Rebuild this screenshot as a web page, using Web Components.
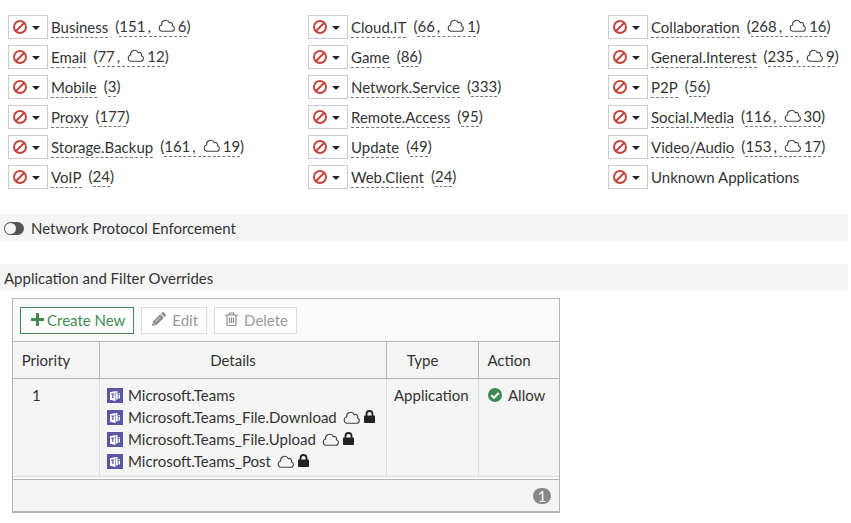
<!DOCTYPE html>
<html lang="en">
<head>
<meta charset="utf-8">
<title>Application Control</title>
<style>
    body {
        margin: 0;
        background: #fff;
        color: #333;
        font: 15px/22px Lato, "Open Sans", sans-serif;
    }
    .categories {
        display: grid;
        grid-template-columns: minmax(0, 300px) minmax(0, 300px) 1fr;
        row-gap: 6px;
        padding: 15px 0 25px 8px;
    }
    main {
        margin-right: 3px;
    }
    section-bar + section-bar {
        margin-top: 23px;
    }
    overrides-panel {
        margin: 7px 0 0 12px;
    }
</style>
</head>
<body>

<template id="ui-icon-template">
    <style>
        :host { display: inline-flex; flex: none; }
        svg { display: none; }
        :host([name="ban"]) .ban,
        :host([name="caret"]) .caret,
        :host([name="cloud"]) .cloud,
        :host([name="plus"]) .plus,
        :host([name="pencil"]) .pencil,
        :host([name="trash"]) .trash,
        :host([name="teams"]) .teams,
        :host([name="lock"]) .lock,
        :host([name="check"]) .check { display: block; }
    </style>
    <svg class="ban" width="14" height="14" viewBox="0 0 14 14" fill="none" stroke="#c4453c" stroke-width="2"><circle cx="7" cy="7" r="6"/><path d="M3 11 11 3"/></svg>
    <svg class="caret" width="8" height="6" viewBox="0 0 8 6"><path d="M0 2h8L4 6z" fill="#222"/></svg>
    <svg class="cloud" width="17" height="13" viewBox="0 0 17 13" fill="none" stroke="#444" stroke-width="1.1"><path d="M3.600 12.200h9.900a2.800 2.800 0 0 0 .8-5.500 2.200 2.200 0 0 0-3-3A4 4 0 0 0 3.700 6 3.200 3.200 0 0 0 3.600 12.200z"/></svg>
    <svg class="plus" width="13" height="13" viewBox="0 0 13 13"><path d="M5 0h3v5h5v3H8v5H5V8H0V5h5z" fill="#3e8a52"/></svg>
    <svg class="pencil" width="14" height="14" viewBox="0 0 14 14"><path d="M0 14l1-4.500L8.300 2.200l3.500 3.500L4.500 13zM9.100 1.400l1-1a1.200 1.200 0 0 1 1.700 0l1.800 1.800a1.200 1.200 0 0 1 0 1.700l-1 1z" fill="#8c8c8c"/><path d="M3.500 9.900l4.500-4.500" stroke="#fff" stroke-width=".7"/><path d="M1.200 11l1.800 1.800" stroke="#fff" stroke-width=".7"/></svg>
    <svg class="trash" width="13" height="14" viewBox="0 0 13 14" fill="none" stroke="#8c8c8c" stroke-width="1.200"><path d="M0 3h13M4 3l.6-2h3.800L9 3M2 3v9a1.500 1.500 0 0 0 1.500 1.500h6A1.500 1.500 0 0 0 11 12V3M4.500 5.500v5.500M6.500 5.500v5.500M8.500 5.500v5.500"/></svg>
    <svg class="teams" width="16" height="15" viewBox="0 0 16 15"><path d="M0 0h16v15H0z" fill="#5b55a5"/><path d="M3 4.200 8.500 3v10L3 11.800z" fill="#fff"/><path d="M4 6h3.500M5.800 6v4" stroke="#5b55a5" stroke-width="1.200"/><path d="M9 5.300h1.700v6.200H9zM11.500 7H13v3.500h-1.500z" fill="#fff"/><circle cx="9.700" cy="4" r="1" fill="#fff"/><circle cx="12.200" cy="5.700" r=".8" fill="#fff"/></svg>
    <svg class="lock" width="11" height="13" viewBox="0 0 11 13"><path d="M2.500 6V4a3 3 0 0 1 6 0v2" fill="none" stroke="#222" stroke-width="1.800"/><rect y="5.500" width="11" height="7.500" rx=".8" fill="#222"/></svg>
    <svg class="check" width="14" height="14" viewBox="0 0 14 14"><circle cx="7" cy="7" r="7" fill="#3e8a52"/><path d="M3.300 7.200 6 9.800l4.800-4.900" fill="none" stroke="#fff" stroke-width="2.200"/></svg>
</template>

<template id="app-category-template">
    <style>
        :host { display: flex; align-items: center; gap: 3px; height: 24px; white-space: nowrap; }
        button {
            display: flex;
            align-items: center;
            gap: 5px;
            box-sizing: border-box;
            width: 40px;
            height: 24px;
            padding: 0 0 1px 4px;
            border: 1px solid #ccc;
            background: #fff;
        }
        .text { display: flex; align-items: flex-start; gap: 7px; }
        a { color: inherit; text-decoration: none; }
        .name { line-height: 20px; }
        .name[href] { border-bottom: 1px dashed #777; padding-top: 1px; }
        .count { display: flex; line-height: 20px; }
        .count a { display: flex; align-items: center; height: 20px; border-bottom: 1px dashed #777; }
        .comma { padding: 0 7px 0 2px; }
        .cloud { display: flex; align-items: center; gap: 3px; }
        .cloud ui-icon { padding-bottom: 1px; }
    </style>
    <button type="button" aria-label="Block"><ui-icon name="ban"></ui-icon><ui-icon name="caret"></ui-icon></button>
    <div class="text">
        <a class="name"><slot></slot></a>
        <span class="count">(<a href="#"><span class="total"></span><span class="comma">,</span><span class="cloud"><ui-icon name="cloud"></ui-icon><span class="cloud-total"></span></span></a>)</span>
    </div>
</template>

<template id="section-bar-template">
    <style>
        :host { display: block; background: #f5f5f5; }
        div { display: flex; align-items: center; gap: 7px; padding: 3px 4px 2px; }
        h2 { margin: 0; font: inherit; }
        input {
            appearance: none;
            display: none;
            box-sizing: border-box;
            width: 20px;
            height: 13px;
            margin: 0;
            padding: 1px;
            border-radius: 7px;
            background: #555;
        }
        input::before { content: ""; width: 11px; height: 11px; border-radius: 50%; background: #f5f5f5; }
        input:checked { justify-content: flex-end; }
        :host([toggle]) input { display: flex; }
    </style>
    <div>
        <input type="checkbox" id="switch">
        <h2><label for="switch"><slot></slot></label></h2>
    </div>
</template>

<template id="tool-button-template">
    <style>
        :host { display: block; }
        button {
            display: flex;
            align-items: center;
            gap: 6px;
            box-sizing: border-box;
            height: 27px;
            padding: 0 8px 1px 10px;
            border: 1px solid #ddd;
            background: #fff;
            color: #999;
            font: inherit;
        }
        ui-icon { padding-bottom: 2px; }
        :host([primary]) button { gap: 3px; border-color: #3e8a52; color: #3e8a52; }
    </style>
    <button type="button"><ui-icon></ui-icon><slot></slot></button>
</template>

<template id="app-signature-template">
    <style>
        :host { display: flex; align-items: center; gap: 5px; height: 22px; white-space: nowrap; }
        .flags { display: none; align-items: center; gap: 4px; padding-left: 1px; }
        :host([cloud]) .flags { display: flex; }
        .flags ui-icon[name="lock"] { padding-bottom: 2px; }
    </style>
    <ui-icon name="teams"></ui-icon>
    <span><slot></slot></span>
    <span class="flags"><ui-icon name="cloud"></ui-icon><ui-icon name="lock"></ui-icon></span>
</template>

<template id="overrides-panel-template">
    <style>
        :host { display: block; width: fit-content; border: 1px solid #b5b5b5; border-bottom-width: 2px; }
        .toolbar { display: flex; gap: 7px; padding: 8px 7px 7px; background: #fafafa; }
        table { border-collapse: separate; border-spacing: 0; }
        th, td { background: #f5f5f5; border-right: 1px solid #ddd; }
        th:last-child, td:last-child { border-right: 0; }
        th {
            padding: 7px 20px 7px 0;
            border-top: 1px solid #b5b5b5;
            border-bottom: 1px solid #b5b5b5;
            border-right-color: #b5b5b5;
            font-weight: normal;
        }
        td { padding: 5px 7px 4px; border-bottom: 1px solid #ddd; vertical-align: top; }
        .priority { width: 66px; }
        .details { width: 266px; }
        .type { width: 71px; }
        .action { width: 60px; }
        td.index { padding-left: 19px; }
        .verdict { display: flex; align-items: center; gap: 6px; padding-left: 2px; }
        footer { display: flex; justify-content: flex-end; margin-top: 2px; padding: 8px 8px 7px; border-top: 1px solid #b5b5b5; background: #f5f5f5; }
        .page { width: 18px; height: 16px; border-radius: 8px; background: #888; color: #fff; line-height: 16px; text-align: center; }
    </style>
    <div class="toolbar"><slot name="toolbar"></slot></div>
    <table>
        <thead>
            <tr><th class="priority">Priority</th><th class="details">Details</th><th class="type">Type</th><th class="action">Action</th></tr>
        </thead>
        <tbody>
            <tr>
                <td class="index">1</td>
                <td><slot></slot></td>
                <td>Application</td>
                <td><span class="verdict"><ui-icon name="check"></ui-icon>Allow</span></td>
            </tr>
        </tbody>
    </table>
    <footer><span class="page">1</span></footer>
</template>

<main>
    <div class="categories">
        <app-category total="151" cloud="6">Business</app-category>
        <app-category total="66" cloud="1">Cloud.IT</app-category>
        <app-category total="268" cloud="16">Collaboration</app-category>
        <app-category total="77" cloud="12">Email</app-category>
        <app-category total="86">Game</app-category>
        <app-category total="235" cloud="9">General.Interest</app-category>
        <app-category total="3">Mobile</app-category>
        <app-category total="333">Network.Service</app-category>
        <app-category total="56">P2P</app-category>
        <app-category total="177">Proxy</app-category>
        <app-category total="95">Remote.Access</app-category>
        <app-category total="116" cloud="30">Social.Media</app-category>
        <app-category total="161" cloud="19">Storage.Backup</app-category>
        <app-category total="49">Update</app-category>
        <app-category total="153" cloud="17">Video/Audio</app-category>
        <app-category total="24">VoIP</app-category>
        <app-category total="24">Web.Client</app-category>
        <app-category>Unknown Applications</app-category>
    </div>
    <section-bar toggle>Network Protocol Enforcement</section-bar>
    <section-bar>Application and Filter Overrides</section-bar>
    <overrides-panel>
        <tool-button slot="toolbar" icon="plus" primary>Create New</tool-button>
        <tool-button slot="toolbar" icon="pencil">Edit</tool-button>
        <tool-button slot="toolbar" icon="trash">Delete</tool-button>
        <app-signature>Microsoft.Teams</app-signature>
        <app-signature cloud>Microsoft.Teams_File.Download</app-signature>
        <app-signature cloud>Microsoft.Teams_File.Upload</app-signature>
        <app-signature cloud>Microsoft.Teams_Post</app-signature>
    </overrides-panel>
</main>

<script type="module">
    class TemplateElement extends HTMLElement {
        constructor() {
            super();
            var template = document.getElementById(this.localName + '-template');
            this.attachShadow({mode: 'open'}).appendChild(template.content.cloneNode(true));
        }
    }

    class UiIcon extends TemplateElement {}

    class AppCategory extends TemplateElement {
        connectedCallback() {
            var root = this.shadowRoot;
            var total = this.getAttribute('total');
            var cloud = this.getAttribute('cloud');
            // categories without signatures have nothing to drill into
            if (!total) {
                root.querySelector('.count').remove();
                return;
            }
            root.querySelector('.name').href = '#';
            root.querySelector('.total').textContent = total;
            if (cloud) {
                root.querySelector('.cloud-total').textContent = cloud;
            } else {
                root.querySelector('.comma').remove();
                root.querySelector('.cloud').remove();
            }
        }
    }

    class SectionBar extends TemplateElement {
        connectedCallback() {
            if (!this.hasAttribute('toggle')) {
                this.shadowRoot.querySelector('input').remove();
                this.shadowRoot.querySelector('h2').innerHTML = '<slot></slot>';
            }
        }
    }

    class ToolButton extends TemplateElement {
        connectedCallback() {
            this.shadowRoot.querySelector('ui-icon').setAttribute('name', this.getAttribute('icon'));
            this.shadowRoot.querySelector('button').disabled = !this.hasAttribute('primary');
        }
    }

    class AppSignature extends TemplateElement {}
    class OverridesPanel extends TemplateElement {}

    customElements.define('ui-icon', UiIcon);
    customElements.define('app-category', AppCategory);
    customElements.define('section-bar', SectionBar);
    customElements.define('tool-button', ToolButton);
    customElements.define('app-signature', AppSignature);
    customElements.define('overrides-panel', OverridesPanel);
</script>
</body>
</html>
